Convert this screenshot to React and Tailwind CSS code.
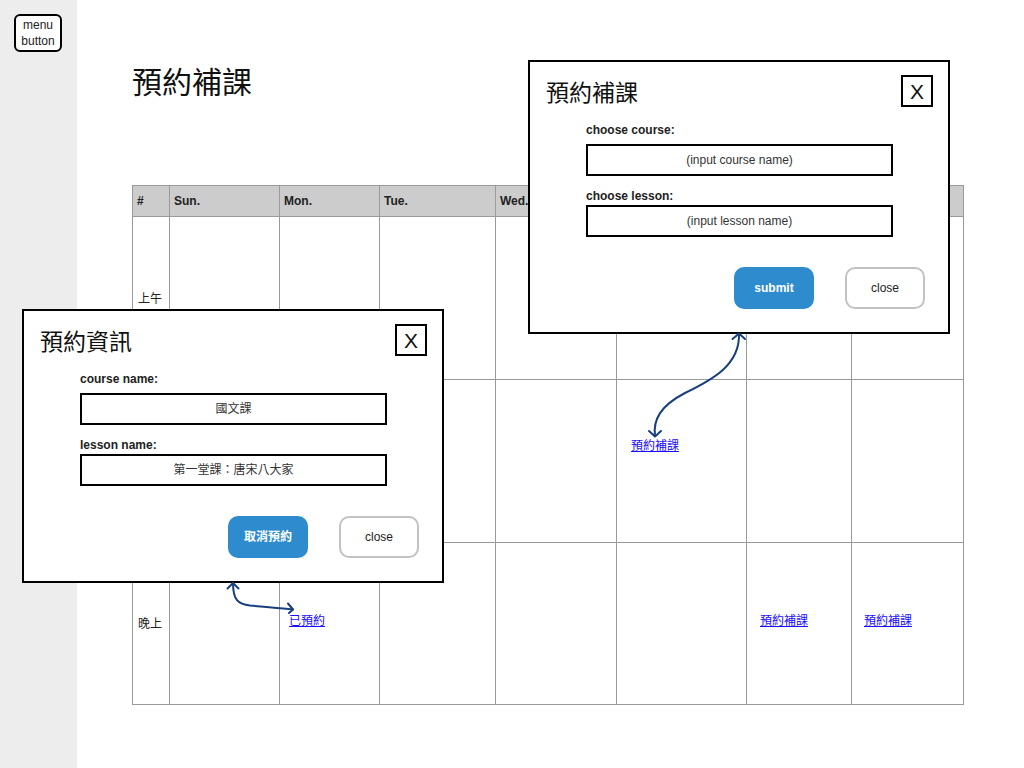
import React from "react";

const sans = "font-['Liberation_Sans','Noto_Sans_CJK_TC',sans-serif]";
const cjk = "font-['Noto_Sans_CJK_TC','Liberation_Sans',sans-serif]";

const days = ["#", "Sun.", "Mon.", "Tue.", "Wed.", "Thu.", "Fri.", "Sat."];

function Cell({ children, className = "" }) {
  return (
    <div className={`border-r border-b border-[#9a9a9a] flex items-center text-[12px] text-[#222] ${className}`}>
      {children}
    </div>
  );
}

function Link({ children }) {
  return <span className="text-[#1a0dff] underline">{children}</span>;
}

function Dialog({ title, fields, primary, className }) {
  return (
    <div className={`absolute w-[422px] h-[274px] border-2 border-black bg-white ${className}`}>
      {/* Header */}
      <div className="flex justify-between items-center pl-4 pr-[15px] pt-[13px]">
        <h2 className={`${cjk} text-[23px] leading-8 text-[#111]`}>{title}</h2>
        <div className={`${sans} w-8 h-8 border-2 border-black flex items-center justify-center text-[21px] leading-none text-[#111]`}>
          X
        </div>
      </div>

      {/* Fields */}
      <div className="pl-[56px] pt-4">
        <p className={`${sans} font-bold text-[12px] leading-[14px] text-[#222]`}>{fields[0].label}</p>
        <div className={`${sans} mt-[7px] w-[307px] h-8 border-2 border-black flex items-center justify-center text-[12px] text-[#333]`}>
          {fields[0].value}
        </div>
        <p className={`${sans} mt-[13px] font-bold text-[12px] leading-[14px] text-[#222]`}>{fields[1].label}</p>
        <div className={`${sans} mt-[2px] w-[307px] h-8 border-2 border-black flex items-center justify-center text-[12px] text-[#333]`}>
          {fields[1].value}
        </div>
      </div>

      {/* Actions */}
      <div className="flex justify-end gap-[31px] pr-[23px] mt-[30px]">
        <button className={`${sans} w-20 h-[42px] rounded-[10px] bg-[#2e8bce] text-white font-bold text-[12px]`}>
          {primary}
        </button>
        <button className={`${sans} w-20 h-[42px] rounded-[10px] border-2 border-[#c2c2c2] bg-white text-[#222] text-[12px]`}>
          close
        </button>
      </div>
    </div>
  );
}

export default function App() {
  return (
    <div className={`relative flex w-[1024px] h-[768px] bg-white overflow-hidden ${sans}`}>
      {/* Sidebar */}
      <div className="w-[77px] h-full bg-[#ededed] shrink-0 pt-[14px] pl-[14px]">
        <button className="w-12 h-[38px] border-2 border-black rounded-[6px] bg-white text-[12px] leading-[16px] text-[#222]">
          menu
          <br />
          button
        </button>
      </div>

      {/* Main */}
      <div className="pl-[55px] pt-[62px]">
        <h1 className={`${cjk} text-[30px] leading-[36px] text-[#111]`}>預約補課</h1>

        <div className="mt-[87px] grid grid-cols-[37px_110px_100px_116px_121px_130px_105px_112px] border-l border-t border-[#9a9a9a]">
          {days.map((d) => (
            <Cell key={d} className="h-[31px] bg-[#cccccc] pl-1 font-bold">
              {d}
            </Cell>
          ))}

          {/* 上午 */}
          <Cell className="h-[163px] pl-[5px]"><span className={cjk}>上午</span></Cell>
          <Cell className="h-[163px]" />
          <Cell className="h-[163px]" />
          <Cell className="h-[163px]" />
          <Cell className="h-[163px]" />
          <Cell className="h-[163px]" />
          <Cell className="h-[163px]" />
          <Cell className="h-[163px]" />

          {/* 下午 */}
          <Cell className="h-[163px] pl-[5px]"><span className={cjk}>下午</span></Cell>
          <Cell className="h-[163px]" />
          <Cell className="h-[163px]" />
          <Cell className="h-[163px]" />
          <Cell className="h-[163px]" />
          <Cell className="h-[163px] pl-[14px] pb-[30px]"><Link>預約補課</Link></Cell>
          <Cell className="h-[163px]" />
          <Cell className="h-[163px]" />

          {/* 晚上 */}
          <Cell className="h-[162px] pl-[5px] pb-[2px]"><span className={cjk}>晚上</span></Cell>
          <Cell className="h-[162px]" />
          <Cell className="h-[162px] pl-[9px] pb-[6px]"><Link>已預約</Link></Cell>
          <Cell className="h-[162px]" />
          <Cell className="h-[162px]" />
          <Cell className="h-[162px]" />
          <Cell className="h-[162px] pl-[13px] pb-[6px]"><Link>預約補課</Link></Cell>
          <Cell className="h-[162px] pl-3 pb-[6px]"><Link>預約補課</Link></Cell>
        </div>
      </div>

      <Dialog
        className="left-[22px] top-[309px]"
        title="預約資訊"
        fields={[
          { label: "course name:", value: "國文課" },
          { label: "lesson name:", value: "第一堂課：唐宋八大家" },
        ]}
        primary="取消預約"
      />

      <Dialog
        className="left-[528px] top-[60px]"
        title="預約補課"
        fields={[
          { label: "choose course:", value: "(input course name)" },
          { label: "choose lesson:", value: "(input lesson name)" },
        ]}
        primary="submit"
      />

      {/* connector arrows */}
      <svg className="absolute inset-0 pointer-events-none" width="1024" height="768" fill="none" stroke="#173f7e" strokeWidth="2" strokeLinecap="round" strokeLinejoin="round">
        <path d="M739 334 C740 365 712 380 685 393 C660 406 653 420 655 436" />
        <path d="M732.5 339 L739 333.5 L745 339" />
        <path d="M649 431 L655 436.5 L661 431" />
        <path d="M233 583 C233 600 238 604 250 605.5 C265 607 280 608 293 609.5" />
        <path d="M227.5 588.5 L233 583 L238.5 588.5" />
        <path d="M288 603.5 L293 609.5 L289 613" />
      </svg>
    </div>
  );
}
